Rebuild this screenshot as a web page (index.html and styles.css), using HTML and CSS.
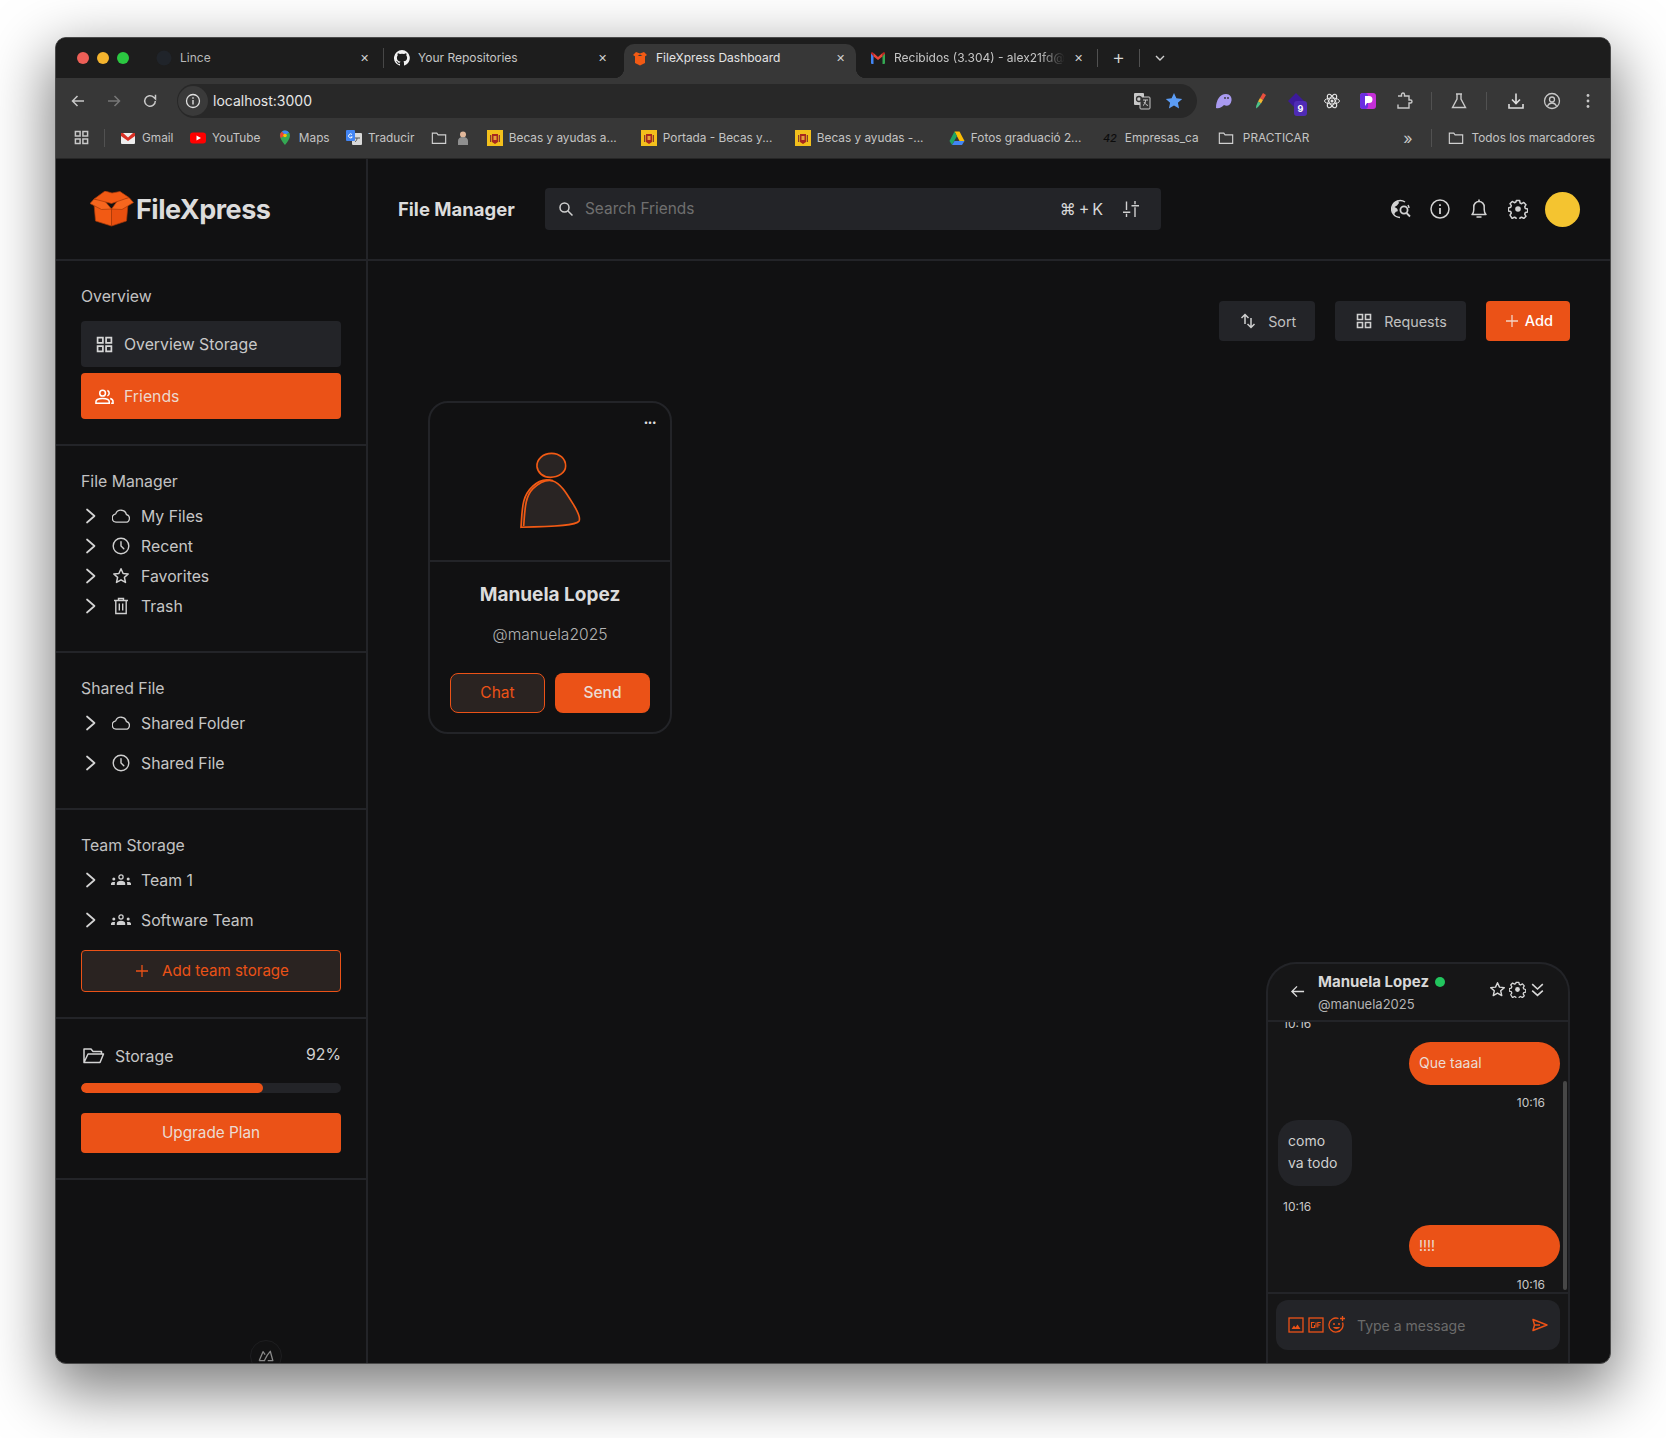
FILE: index.html
```html
<!DOCTYPE html>
<html>

<head>
    <title>FileXpress Dashboard</title>
    <link rel="stylesheet" href="styles.css">
</head>

<body>
    <svg class="sprite" xmlns="http://www.w3.org/2000/svg">
        <symbol id="i-grid" viewBox="0 0 16 16"><path d="M1.5 1.5h5v5h-5zM9.5 1.5h5v5h-5zM1.5 9.5h5v5h-5zM9.5 9.5h5v5h-5z" fill="none" stroke="currentColor" stroke-width="1.6"/></symbol>
        <symbol id="i-chevron" viewBox="0 0 12 16"><path d="M2 1.500 9.500 8 2 14.500" fill="none" stroke="currentColor" stroke-width="1.700" stroke-linecap="round" stroke-linejoin="round"/></symbol>
        <symbol id="i-cloud" viewBox="1 1 18 14"><path d="M5 14.200h9.600a3.900 3.900 0 0 0 .8-7.700 5.600 5.600 0 0 0-10.700-.6A4.200 4.200 0 0 0 5 14.200z" fill="none" stroke="currentColor" stroke-width="1.300" stroke-linejoin="round"/></symbol>
        <symbol id="i-clock" viewBox="0 0 18 18"><circle cx="9" cy="9" r="7.800" fill="none" stroke="currentColor" stroke-width="1.400"/><path d="M9 4.600V9l2.800 2.800" fill="none" stroke="currentColor" stroke-width="1.400" stroke-linecap="round"/></symbol>
        <symbol id="i-star" viewBox="0 0 18 18"><path d="m9 1.800 2.100 4.700 5.100.5-3.800 3.400 1.100 5-4.500-2.600-4.500 2.600 1.100-5L1.800 7l5.100-.5z" fill="none" stroke="currentColor" stroke-width="1.500" stroke-linejoin="round"/></symbol>
        <symbol id="i-trash" viewBox="0 0 16 18"><path d="M1 3.500h14M5.500 3V1.500h5V3M2.800 3.500v13h10.400v-13M6.300 6.500v7M9.700 6.500v7" fill="none" stroke="currentColor" stroke-width="1.400"/></symbol>
        <symbol id="i-team" viewBox="0 0 20 12"><g fill="currentColor"><circle cx="10" cy="3" r="2.100" fill="none" stroke="currentColor" stroke-width="1.300"/><path d="M5.800 11V9.500c0-1.800 1.800-2.800 4.200-2.800s4.200 1 4.200 2.800V11z"/><circle cx="2.800" cy="5" r="1.500"/><path d="M0 11V9.700C0 8.500 1.100 8 2.800 8c.6 0 1 .1 1.400.2a4 4 0 0 0-.4 1.600V11z"/><circle cx="17.200" cy="5" r="1.500"/><path d="M20 11V9.700C20 8.500 18.900 8 17.200 8c-.6 0-1 .1-1.400.2.300.5.400 1 .4 1.600V11z"/></g></symbol>
        <symbol id="i-gear" viewBox="0 0 20 20"><path d="M8.400 1.500h3.200l.5 2.500 1.500.7 2.200-1.300 2.200 2.300-1.300 2.100.6 1.600 2.400.6v3l-2.400.6-.6 1.500 1.300 2.200-2.200 2.200-2.200-1.300-1.500.6-.5 2.500H8.400l-.5-2.500-1.500-.6-2.200 1.300L2 16.200l1.300-2.200-.6-1.500-2.400-.6v-3l2.400-.6.6-1.600L2 4.700l2.200-2.300 2.200 1.300 1.500-.7z" fill="none" stroke="currentColor" stroke-width="1.500" stroke-linejoin="round"/><circle cx="10" cy="10" r="2.800" fill="currentColor"/></symbol>
        <symbol id="i-folder" viewBox="0 0 18 16"><path d="M1.500 14V2.500h5l1.500 2h8.500V14z" fill="none" stroke="currentColor" stroke-width="1.300"/></symbol>
        <symbol id="i-flag" viewBox="0 0 16 16"><rect width="16" height="16" fill="#f3c01c"/><path d="M5 4h6v8l-3 2-3-2z" fill="#a8281e"/><path d="M6.500 6h3v4h-3z" fill="#e7a23a"/><path d="M3 5h1.300v7H3zM11.700 5H13v7h-1.300z" fill="#8c3b2c"/></symbol>
        <symbol id="i-plus" viewBox="0 0 12 12"><path d="M6 0v12M0 6h12" fill="none" stroke="currentColor" stroke-width="1.300"/></symbol>
    </svg>

    <div class="window">
        <div class="tabstrip">
            <div class="lights"><span class="light red"></span><span class="light amber"></span><span class="light green"></span></div>
            <div class="tab">
                <svg class="fav" viewBox="0 0 16 16"><circle cx="8" cy="8" r="7.500" fill="#20242a"/></svg>
                <span class="tab-title dim">Lince</span><span class="tab-close">✕</span>
            </div>
            <div class="tab tab-sep">
                <svg class="fav" viewBox="0 0 16 16"><path fill="#f1f1f1" d="M8 0a8 8 0 0 0-2.500 15.600c.4.100.5-.2.500-.4v-1.400c-2.200.5-2.700-1-2.700-1-.4-.9-.9-1.200-.9-1.200-.7-.5.100-.5.100-.5.800.100 1.200.8 1.200.8.700 1.200 1.900.9 2.300.7.100-.5.300-.9.500-1.100-1.800-.2-3.600-.9-3.600-4 0-.9.300-1.600.8-2.100-.1-.2-.4-1 .1-2.100 0 0 .7-.2 2.200.8a7.600 7.600 0 0 1 4 0c1.500-1 2.200-.8 2.200-.8.500 1.100.2 1.900.1 2.100.5.600.8 1.300.8 2.100 0 3.100-1.900 3.700-3.700 3.900.3.300.6.800.6 1.500v2.200c0 .2.100.5.600.4A8 8 0 0 0 8 0z"/></svg>
                <span class="tab-title">Your Repositories</span><span class="tab-close">✕</span>
            </div>
            <div class="tab tab-active">
                <svg class="fav" viewBox="0 0 16 16"><path fill="#f25a14" d="M3 6h10v7l-5 2.500L3 13zM1 5l3-3 4 1.500 4-1.500 3 3-3 2-4-2.500L4 7z"/></svg>
                <span class="tab-title bright">FileXpress Dashboard</span><span class="tab-close">✕</span>
            </div>
            <div class="tab tab-last">
                <svg class="fav" viewBox="0 0 16 16"><path fill="#4285f4" d="M1 3.500h2.500V14H2a1 1 0 0 1-1-1z"/><path fill="#34a853" d="M12.500 3.500H15V13a1 1 0 0 1-1 1h-1.500z"/><path fill="#ea4335" d="m3.500 3 4.500 4 4.500-4v3.500L8 10 3.500 6.500z"/><path fill="#c5221f" d="M1 3.500C1 2.200 2.500 1.700 3.500 3v3.500zM15 3.500c0-1.300-1.500-1.800-2.500-.5v3.500z"/></svg>
                <span class="tab-title fade">Recibidos (3.304) - alex21fd@</span><span class="tab-close">✕</span>
            </div>
            <span class="strip-sep"></span>
            <span class="new-tab">+</span>
            <span class="strip-sep"></span>
            <svg class="tab-menu" viewBox="0 0 10 6"><path d="m1 1 4 4 4-4" fill="none" stroke="#d0d0d0" stroke-width="1.400"/></svg>
        </div>

        <div class="toolbar">
            <svg class="nav" viewBox="0 0 16 16"><path d="M14 8H2.500M7.500 3l-5 5 5 5" fill="none" stroke="#c8c8c8" stroke-width="1.500"/></svg>
            <svg class="nav" viewBox="0 0 16 16"><path d="M2 8h11.500M8.500 3l5 5-5 5" fill="none" stroke="#777" stroke-width="1.500"/></svg>
            <svg class="nav" viewBox="0 0 16 16"><path d="M13.300 8a5.300 5.300 0 1 1-1.600-3.800L13.500 6V1.800" fill="none" stroke="#c8c8c8" stroke-width="1.500"/></svg>
            <div class="urlbar">
                <span class="url-info"><svg viewBox="0 0 16 16"><circle cx="8" cy="8" r="6.500" fill="none" stroke="#e0e0e0" stroke-width="1.300"/><path d="M8 7v4.500M8 4.300v1.400" stroke="#e0e0e0" stroke-width="1.400"/></svg></span>
                <span class="url-text">localhost:3000</span>
                <svg class="url-translate" viewBox="0 0 18 18"><rect x="1" y="1" width="10" height="12" rx="1" fill="#c8c8c8"/><rect x="7" y="5" width="10" height="12" rx="1" fill="#333" stroke="#c8c8c8"/><circle cx="6" cy="7" r="2.500" fill="none" stroke="#333" stroke-width="1.300"/><path d="M10 8h5M12.500 8c0 3-1 4.500-2.500 5.500M11 10c1 2 2.500 3 4 3.500" fill="none" stroke="#c8c8c8"/></svg>
                <svg class="url-star" viewBox="0 0 18 18"><path d="m9 1 2.400 5.300 5.800.6-4.300 3.900 1.200 5.700L9 13.600l-5.100 2.900 1.200-5.700L.8 6.900l5.800-.6z" fill="#5b9cf5"/></svg>
            </div>
            <div class="extensions">
                <svg class="ext" viewBox="0 0 18 18"><path d="M1 16C1 8 5 2 11 2c4 0 6 3 5.500 6.500C16 13 12 15 9 13c-2 2-5 4-8 3z" fill="#a99af0"/><circle cx="10" cy="6" r=".9" fill="#333"/><circle cx="13" cy="6" r=".9" fill="#333"/></svg>
                <svg class="ext" viewBox="0 0 18 18"><path d="m12 1 3 2-3 5-3-2z" fill="#ea4f3d"/><path d="m9 6 3 2-2 3.500-3-2z" fill="#f2b632"/><path d="m7 9.500 3 2L7 15l-2 1.500.2-2.500z" fill="#4cc38a"/></svg>
                <span class="ext-stack">
                    <svg class="ext" viewBox="0 0 18 18"><path d="m9 1 8 8-8 8-8-8z" fill="#3c1a9a"/></svg>
                    <span class="ext-badge">9</span>
                </span>
                <svg class="ext" viewBox="0 0 18 18"><g fill="none" stroke="#e4e4e4" stroke-width="1"><ellipse cx="9" cy="9" rx="7.500" ry="3"/><ellipse cx="9" cy="9" rx="7.500" ry="3" transform="rotate(60 9 9)"/><ellipse cx="9" cy="9" rx="7.500" ry="3" transform="rotate(120 9 9)"/></g><circle cx="9" cy="9" r="1.500" fill="#e4e4e4"/></svg>
                <svg class="ext" viewBox="0 0 18 18"><rect x="1" y="1" width="16" height="16" rx="3" fill="#c42fd8"/><rect x="1" y="1" width="8" height="16" rx="3" fill="#6a2de0"/><path d="M6 14V4h4a3.500 3.500 0 0 1 0 7H8l-2 3z" fill="#fff"/></svg>
                <svg class="ext" viewBox="0 0 18 18"><path d="M3 4h3.500V2.500a1.500 1.500 0 0 1 3 0V4H14v4h1.500a1.500 1.500 0 0 1 0 3H14v5H3v-3.500" fill="none" stroke="#c8c8c8" stroke-width="1.400"/></svg>
                <span class="strip-sep"></span>
                <svg class="ext" viewBox="0 0 18 18"><path d="M6 2h6M7 2v5l-4.500 8.500h13L11 7V2" fill="none" stroke="#c8c8c8" stroke-width="1.400"/></svg>
                <span class="strip-sep"></span>
                <svg class="ext ext-download" viewBox="0 0 18 18"><path d="M9 1.500V11M5 7.500 9 11.500l4-4M2 12v4h14v-4" fill="none" stroke="#dcdcdc" stroke-width="1.600"/></svg>
                <svg class="ext" viewBox="0 0 18 18"><circle cx="9" cy="9" r="7.500" fill="none" stroke="#c8c8c8" stroke-width="1.300"/><circle cx="9" cy="7.500" r="2.500" fill="none" stroke="#c8c8c8" stroke-width="1.300"/><path d="M4.500 14c1-2 2.500-3 4.500-3s3.500 1 4.500 3" fill="none" stroke="#c8c8c8" stroke-width="1.300"/></svg>
                <svg class="ext" viewBox="0 0 18 18"><g fill="#c8c8c8"><circle cx="9" cy="3.500" r="1.400"/><circle cx="9" cy="9" r="1.400"/><circle cx="9" cy="14.500" r="1.400"/></g></svg>
            </div>
        </div>

        <div class="bookmarks">
            <svg class="bm-apps"><use href="#i-grid"/></svg>
            <span class="strip-sep bm-first-sep"></span>
            <span class="bm">
                <svg viewBox="0 0 16 16"><rect x="1" y="3" width="14" height="11" rx="1" fill="#eee"/><path d="M1 3h2l5 4.500L13 3h2v3l-7 5-7-5z" fill="#d93025"/></svg>Gmail
            </span>
            <span class="bm">
                <svg viewBox="0 0 16 16"><rect y="2.500" width="16" height="11" rx="3" fill="#f00"/><path d="M6.500 5.500 11 8l-4.500 2.500z" fill="#fff"/></svg>YouTube
            </span>
            <span class="bm">
                <svg viewBox="0 0 16 16"><path d="M8 15S3 9.500 3 5.500a5 5 0 0 1 10 0C13 9.500 8 15 8 15z" fill="#34a853"/><path d="M3 5.500a5 5 0 0 1 2-4l3 3.500-4 3a6 6 0 0 1-1-2.500z" fill="#ea4335"/><path d="M5 1.500a5 5 0 0 1 3-1 5 5 0 0 1 4 2L8 5z" fill="#4285f4"/><circle cx="8" cy="5.500" r="1.800" fill="#fbbc04"/></svg>Maps
            </span>
            <span class="bm">
                <svg viewBox="0 0 16 16"><rect x="6" y="3" width="10" height="12" rx="1" fill="#d9d9d9"/><rect width="9" height="11" rx="1" fill="#4285f4"/><path d="M6 4.500a2 2 0 1 0 .3 2.500H4.700" fill="none" stroke="#fff"/><path d="M9 8h5M11 8c0 2-1 3-2 4" fill="none" stroke="#555"/></svg>Traducir
            </span>
            <span class="bm bm-folder">
                <svg><use href="#i-folder"/></svg>
                <svg viewBox="0 0 16 16"><circle cx="8" cy="4.500" r="3" fill="#e0b79a"/><path d="M3 15v-4c0-2.500 2-4 5-4s5 1.500 5 4v4z" fill="#8f8f8f"/></svg>
            </span>
            <span class="bm bm-wide"><svg><use href="#i-flag"/></svg>Becas y ayudas a...</span>
            <span class="bm bm-wide"><svg><use href="#i-flag"/></svg>Portada - Becas y...</span>
            <span class="bm bm-wide"><svg><use href="#i-flag"/></svg>Becas y ayudas -...</span>
            <span class="bm bm-wide">
                <svg viewBox="0 0 16 16"><path d="M5.500 1.500h5L15.500 11h-5z" fill="#fbbc04"/><path d="M5.500 1.500 .5 11 3 15l5-9z" fill="#1fa463"/><path d="M3 15h10l2.500-4H5.500z" fill="#4285f4"/></svg>Fotos graduació 2...
            </span>
            <span class="bm bm-mid">
                <svg viewBox="0 0 16 16"><text x="0" y="12" class="bm-42">42</text></svg>Empresas_ca
            </span>
            <span class="bm bm-practice"><svg><use href="#i-folder"/></svg>PRACTICAR</span>
            <span class="bm-more">»</span>
            <span class="strip-sep"></span>
            <span class="bm bm-all"><svg><use href="#i-folder"/></svg>Todos los marcadores</span>
        </div>

        <div class="app">
            <aside class="sidebar">
                <div class="logo">
                    <svg class="logo-box" viewBox="0 0 44 36">
                        <path d="M4 13 21.500 18v17L5.500 30z" fill="#f25a14" stroke="#a83a08" stroke-width=".7"/>
                        <path d="M38 13 21.500 18v17l15-5z" fill="#e84f0f" stroke="#a83a08" stroke-width=".7"/>
                        <path d="M21.500 18 14 9 4 8 0 12.500l11.500 6z" fill="#f7661e" stroke="#a83a08" stroke-width=".7"/>
                        <path d="M21.500 18 28 9l11-2.500 4.500 5-11.500 7z" fill="#f7661e" stroke="#a83a08" stroke-width=".7"/>
                        <path d="M4 8 15 0l7 2 8-1.500 9 6-17.500 6z" fill="#f25a14" stroke="#a83a08" stroke-width=".7"/>
                    </svg>
                    <span class="logo-text">FileXpress</span>
                </div>

                <section class="side-section">
                    <h3 class="side-label">Overview</h3>
                    <a class="side-btn"><svg class="side-icon"><use href="#i-grid"/></svg>Overview Storage</a>
                    <a class="side-btn side-btn-on">
                        <svg class="side-icon" viewBox="0 0 20 16"><g fill="none" stroke="currentColor" stroke-width="1.600"><circle cx="8" cy="4.500" r="3"/><path d="M1 15v-1.500C1 11 4 10 8 10s7 1 7 3.500V15zM13 1.700a3 3 0 0 1 0 5.600M16 10c2 .5 3 1.700 3 3.500V15h-2"/></g></svg>Friends
                    </a>
                </section>

                <section class="side-section sec-files">
                    <h3 class="side-label">File Manager</h3>
                    <ul class="tree tree-tight">
                        <li><svg class="chev"><use href="#i-chevron"/></svg><svg class="tree-icon"><use href="#i-cloud"/></svg>My Files</li>
                        <li><svg class="chev"><use href="#i-chevron"/></svg><svg class="tree-icon"><use href="#i-clock"/></svg>Recent</li>
                        <li><svg class="chev"><use href="#i-chevron"/></svg><svg class="tree-icon"><use href="#i-star"/></svg>Favorites</li>
                        <li><svg class="chev"><use href="#i-chevron"/></svg><svg class="tree-icon"><use href="#i-trash"/></svg>Trash</li>
                    </ul>
                </section>

                <section class="side-section sec-shared">
                    <h3 class="side-label">Shared File</h3>
                    <ul class="tree">
                        <li><svg class="chev"><use href="#i-chevron"/></svg><svg class="tree-icon"><use href="#i-cloud"/></svg>Shared Folder</li>
                        <li><svg class="chev"><use href="#i-chevron"/></svg><svg class="tree-icon"><use href="#i-clock"/></svg>Shared File</li>
                    </ul>
                </section>

                <section class="side-section sec-team">
                    <h3 class="side-label">Team Storage</h3>
                    <ul class="tree">
                        <li><svg class="chev"><use href="#i-chevron"/></svg><svg class="tree-icon tree-icon-team"><use href="#i-team"/></svg>Team 1</li>
                        <li><svg class="chev"><use href="#i-chevron"/></svg><svg class="tree-icon tree-icon-team"><use href="#i-team"/></svg>Software Team</li>
                    </ul>
                    <button class="add-team"><svg class="plus"><use href="#i-plus"/></svg>Add team storage</button>
                </section>

                <section class="side-section sec-storage">
                    <div class="storage-row">
                        <svg class="storage-icon" viewBox="0 0 22 16"><path d="M1 14.500V1h7l2 2.500h8.500V6M1 14.500h16l3.500-8.500H5z" fill="none" stroke="currentColor" stroke-width="1.500" stroke-linejoin="round"/></svg>
                        <span>Storage</span>
                        <span class="storage-pct">92%</span>
                    </div>
                    <div class="progress"><div class="progress-fill" style="width: 70%"></div></div>
                    <button class="upgrade">Upgrade Plan</button>
                </section>
            </aside>

            <main class="main">
                <header class="topbar">
                    <h1 class="page-title">File Manager</h1>
                    <div class="search">
                        <svg class="search-icon" viewBox="0 0 16 16"><circle cx="6.500" cy="6.500" r="4.500" fill="none" stroke="currentColor" stroke-width="1.500"/><path d="m10 10 4.500 4.500" stroke="currentColor" stroke-width="1.500"/></svg>
                        <span class="search-text">Search Friends</span>
                        <span class="search-keys">⌘ + K</span>
                        <svg class="search-sort" viewBox="0 0 16 16"><path d="M3.500.5V9M0 11.300h7.300M3.500 12.800V16M12 0v3.200M8.500 4.700H16M12 6.200V16" fill="none" stroke="currentColor" stroke-width="1.400"/></svg>
                    </div>
                    <div class="top-icons">
                        <svg class="top-icon" viewBox="0 0 20 20"><path d="M14 3A8.500 8.500 0 1 0 9 18.500" fill="none" stroke="currentColor" stroke-width="1.500"/><path d="M7 1.500C3 3 1 6 1 10c0 2 .7 4 2 5.500 1-1 1-3 3-3 1 0 1-2 0-3L3.500 8 6 6.500 8 4z" fill="currentColor"/><circle cx="13" cy="11" r="3.600" fill="none" stroke="currentColor" stroke-width="1.800"/><path d="m15.500 14 3.500 3.500" stroke="currentColor" stroke-width="1.800"/><path d="M18 9a8 8 0 0 0-1-3" fill="none" stroke="currentColor" stroke-width="1.500"/></svg>
                        <svg class="top-icon" viewBox="0 0 20 20"><circle cx="10" cy="10" r="9" fill="none" stroke="currentColor" stroke-width="1.500"/><path d="M10 9v6M10 5.200v1.800" stroke="currentColor" stroke-width="1.800"/></svg>
                        <svg class="top-icon" viewBox="0 0 20 20"><path d="M3 15.500h14c-1.300-1-1.800-2.500-1.800-5V8A5.200 5.200 0 0 0 10 2.500 5.200 5.200 0 0 0 4.800 8v2.500c0 2.500-.5 4-1.800 5z" fill="none" stroke="currentColor" stroke-width="1.500" stroke-linejoin="round"/><path d="M10 .5v2M7.500 18h5" stroke="currentColor" stroke-width="1.600"/></svg>
                        <svg class="top-icon"><use href="#i-gear"/></svg>
                        <span class="avatar"></span>
                    </div>
                </header>

                <div class="actions">
                    <button class="action-btn action-sort"><svg class="action-icon" viewBox="0 0 16 16"><path d="M5 11V1.500M1.500 5 5 1.500 8.500 5M11 5v9.500M7.500 11l3.500 3.500 3.500-3.500" fill="none" stroke="currentColor" stroke-width="1.500"/></svg>Sort</button>
                    <button class="action-btn"><svg class="action-icon"><use href="#i-grid"/></svg>Requests</button>
                    <button class="action-btn action-add"><svg class="action-plus"><use href="#i-plus"/></svg>Add</button>
                </div>

                <article class="friend-card">
                    <div class="card-top">
                        <span class="card-dots">•••</span>
                        <svg class="sketch" viewBox="290 180 200 240">
                            <path d="M352 222c2-20 24-34 50-30 24 4 36 26 30 44-6 18-32 30-56 24-18-4-26-20-24-38z" fill="#292423"/>
                            <path d="M302 412c2-40 4-90 30-118 18-20 40-30 64-24 28 8 46 38 66 74 10 18 20 36 14 48-8 14-60 16-174 20z" fill="#292423"/>
                            <g fill="none" stroke="#f25a14" stroke-width="5">
                                <path d="M350 230c-2-22 18-40 44-40 24 0 42 16 42 38 0 20-22 34-46 34-22 0-38-14-40-32z"/>
                                <path d="M302 412c4-56 2-92 34-122 18-18 40-24 60-18 26 8 44 40 66 76 12 20 20 36 14 46-8 12-60 16-174 18z"/>
                                <path d="M310 408c4-50 4-88 28-112 20-20 42-28 60-24"/>
                            </g>
                        </svg>
                    </div>
                    <div class="card-body">
                        <h2 class="card-name">Manuela Lopez</h2>
                        <p class="card-handle">@manuela2025</p>
                        <div class="card-btns">
                            <button class="btn-chat">Chat</button>
                            <button class="btn-send">Send</button>
                        </div>
                    </div>
                </article>

                <div class="chat">
                    <div class="chat-head">
                        <svg class="chat-back" viewBox="0 0 16 16"><path d="M15 8H2M7.500 2.500 2 8l5.500 5.500" fill="none" stroke="currentColor" stroke-width="1.400"/></svg>
                        <div class="chat-who">
                            <div class="chat-name">Manuela Lopez<span class="online"></span></div>
                            <div class="chat-handle">@manuela2025</div>
                        </div>
                        <div class="chat-tools">
                            <svg class="chat-tool"><use href="#i-star"/></svg>
                            <svg class="chat-tool"><use href="#i-gear"/></svg>
                            <svg class="chat-tool" viewBox="0 0 16 16"><path d="m3 3 5 4.500L13 3M3 9l5 4.500L13 9" fill="none" stroke="currentColor" stroke-width="1.500"/></svg>
                        </div>
                    </div>
                    <div class="chat-log">
                        <div class="msg-time time-clipped">10:16</div>
                        <div class="bubble bubble-me">Que taaal</div>
                        <div class="msg-time time-me">10:16</div>
                        <div class="bubble bubble-them">como<br>va todo</div>
                        <div class="msg-time time-them">10:16</div>
                        <div class="bubble bubble-me bubble-last">!!!!</div>
                        <div class="msg-time time-me">10:16</div>
                        <span class="chat-scroll"></span>
                    </div>
                    <div class="chat-input-row">
                        <div class="chat-input">
                            <svg class="chat-att" viewBox="0 0 16 16"><rect x="1" y="1" width="14" height="14" fill="none" stroke="currentColor" stroke-width="1.300"/><path d="M3.500 12 6 8.500 7.500 10.500 9.500 7.500 12.500 12z" fill="currentColor"/></svg>
                            <svg class="chat-att" viewBox="0 0 16 16"><rect x="1" y="1" width="14" height="14" fill="none" stroke="currentColor" stroke-width="1.300"/><path d="M6.500 5.500h-3v5h3V8M8 5.500v5M9.800 10.500v-5h3M9.800 8h2.500" fill="none" stroke="currentColor" stroke-width="1.100"/></svg>
                            <svg class="chat-att chat-emoji" viewBox="0 0 18 18"><path d="M14.500 6.500A7 7 0 1 1 10.500 2.500" fill="none" stroke="currentColor" stroke-width="1.300"/><circle cx="6" cy="8" r="1" fill="currentColor"/><circle cx="11" cy="8" r="1" fill="currentColor"/><path d="M5 11c1 2.500 6 2.500 7 0z" fill="currentColor"/><path d="M14.500 0v5M12 2.500h5" stroke="currentColor" stroke-width="1.300"/></svg>
                            <span class="chat-placeholder">Type a message</span>
                            <svg class="chat-send" viewBox="0 0 16 14"><path d="M1 1.500 15 7 1 12.500l1.500-5.500zM2.500 7H8" fill="none" stroke="currentColor" stroke-width="1.500" stroke-linejoin="round"/></svg>
                        </div>
                    </div>
                </div>
            </main>
            <span class="devtool"><svg viewBox="0 0 18 14"><path d="M1 12.500 5.500 2 8 5.500M8 12.500H1M7 12.500 10.500 6 14 1.500 17 12.500h-6" fill="none" stroke="#8a8a8a" stroke-width="1.500" stroke-linejoin="round"/></svg></span>
        </div>
    </div>
</body>

</html>
```

FILE: styles.css
```css
* {
    box-sizing: border-box;
}

body {
    margin: 0;
    width: 1666px;
    height: 1438px;
    padding: 37px 0 0 55px;
    background-color: #fff;
    font-family: Inter, "Liberation Sans", sans-serif;
    color: #c9c9c9;
    overflow: hidden;
}

.sprite {
    display: none;
}

.window {
    width: 1556px;
    height: 1327px;
    border: 1px solid #4a4a4a;
    border-radius: 11px;
    background-color: #111112;
    box-shadow: 0 22px 60px 6px rgba(0, 0, 0, .5);
    overflow: hidden;
    position: relative;
}

/* browser chrome */
.tabstrip {
    display: flex;
    align-items: flex-end;
    height: 40px;
    background-color: #1d1d1d;
    position: relative;
}

.lights {
    display: flex;
    gap: 8px;
    width: 92px;
    padding: 0 0 14px 21px;
}

.light {
    width: 12px;
    height: 12px;
    border-radius: 50%;
}

.red { background-color: #ed5f57; }
.amber { background-color: #f4b42e; }
.green { background-color: #2bc841; }

.tab {
    display: flex;
    align-items: center;
    width: 232px;
    height: 34px;
    margin-right: 6px;
    padding: 0 9px 7px 8px;
    font-size: 12px;
    border-radius: 10px 10px 0 0;
    color: #c6c6c6;
    position: relative;
}

.tab-last {
    margin-right: 3px;
}

.tab-sep::before {
    content: "";
    position: absolute;
    left: -3px;
    top: 4px;
    width: 1px;
    height: 20px;
    background-color: #474747;
}

.tab-active {
    background-color: #373737;
}

.tab-active::before,
.tab-active::after {
    content: "";
    position: absolute;
    bottom: 0;
    width: 10px;
    height: 10px;
}

.tab-active::before {
    left: -10px;
    background: radial-gradient(circle at 0 0, transparent 10px, #373737 10.5px);
}

.tab-active::after {
    right: -10px;
    background: radial-gradient(circle at 100% 0, transparent 10px, #373737 10.5px);
}

.fav {
    width: 16px;
    height: 16px;
    flex: none;
    margin-right: 8px;
}

.tab-title {
    flex: 1;
    white-space: nowrap;
    overflow: hidden;
}

.tab-title.dim { color: #b8b8b8; }
.tab-title.bright { color: #e4e4e4; }

.tab-title.fade {
    -webkit-mask-image: linear-gradient(to right, #000 85%, transparent 100%);
    mask-image: linear-gradient(to right, #000 85%, transparent 100%);
}

.tab-close {
    width: 14px;
    margin-left: 6px;
    text-align: center;
    font-size: 11px;
    color: #d0d0d0;
}

.strip-sep {
    display: inline-block;
    width: 1px;
    height: 18px;
    background-color: #515151;
    flex: none;
}

.tabstrip > .strip-sep {
    margin-bottom: 11px;
}

.new-tab {
    width: 41px;
    height: 34px;
    line-height: 27px;
    text-align: center;
    font-size: 20px;
    font-weight: 300;
    color: #d8d8d8;
}

.tab-menu {
    width: 10px;
    height: 6px;
    margin: 0 0 17px 15px;
}

.toolbar {
    display: flex;
    align-items: center;
    height: 42px;
    padding: 6px 0 2px 14px;
    background-color: #373737;
}

.nav {
    width: 16px;
    height: 16px;
    margin-right: 20px;
    flex: none;
}

.urlbar {
    display: flex;
    align-items: center;
    width: 1020px;
    height: 34px;
    margin-left: -1px;
    padding-left: 1px;
    border-radius: 17px;
    background-color: #282828;
    flex: none;
}

.url-info {
    display: flex;
    align-items: center;
    justify-content: center;
    width: 30px;
    height: 30px;
    border-radius: 50%;
    background-color: #3a3a3a;
}

.url-info svg {
    width: 16px;
    height: 16px;
}

.url-text {
    flex: 1;
    margin: -1px 0 0 5px;
    font-size: 14px;
    color: #e6e6e6;
}

.url-translate {
    width: 18px;
    height: 18px;
}

.url-star {
    width: 18px;
    height: 18px;
    margin: 0 14px 0 14px;
}

.extensions {
    display: flex;
    align-items: center;
    gap: 18px;
    margin-left: 18px;
}

.ext {
    display: block;
    width: 18px;
    height: 18px;
    flex: none;
}

.ext-download {
    margin-left: 2px;
}

.ext-stack {
    position: relative;
}

.ext-badge {
    position: absolute;
    left: 7px;
    top: 9px;
    width: 13px;
    height: 15px;
    border-radius: 3px;
    background-color: #4f2bb5;
    color: #fff;
    font-size: 9px;
    font-weight: 700;
    line-height: 15px;
    text-align: center;
}

.bookmarks {
    display: flex;
    align-items: center;
    height: 39px;
    padding: 0 0 3px 18px;
    font-size: 11.8px;
    color: #c4c4c4;
    background-color: #373737;
    border-bottom: 1px solid #262626;
    white-space: nowrap;
}

.bm-apps {
    width: 15px;
    height: 15px;
    color: #c8c8c8;
    flex: none;
}

.bm-first-sep {
    margin: 0 15px 0 15px;
}

.bm {
    display: flex;
    align-items: center;
    gap: 6px;
    margin-right: 16.5px;
}

.bm svg {
    width: 16px;
    height: 16px;
    flex: none;
    color: #d0d0d0;
}

.bm-folder {
    gap: 8px;
    margin-right: 16px;
}

.bm-wide {
    width: 154px;
    margin-right: 0;
}

.bm-mid {
    width: 115px;
    margin-right: 0;
}

.bm-practice {
    gap: 9px;
}

.bm-42 {
    font-size: 11px;
    font-style: italic;
    fill: #0c0c0c;
    stroke: #0c0c0c;
    stroke-width: .2;
}

.bm-more {
    margin-left: auto;
    margin-right: 18px;
    font-size: 16px;
    line-height: 16px;
    color: #c8c8c8;
}

.bm-all {
    gap: 8px;
    margin: 0 15px 0 16px;
}

/* app */
.app {
    display: flex;
    height: 1204px;
    position: relative;
}

.sidebar {
    width: 312px;
    flex: none;
    border-right: 2px solid #232428;
}

.logo {
    display: flex;
    align-items: center;
    gap: 2px;
    height: 102px;
    padding: 0 0 0 34px;
    border-bottom: 2px solid #232428;
}

.logo-box {
    width: 44px;
    height: 36px;
}

.logo-text {
    font-size: 27px;
    font-weight: 700;
    letter-spacing: -.5px;
    color: #dcdcdc;
}

.side-section {
    padding: 26px 25px 25px;
    border-bottom: 2px solid #232428;
}

.side-label {
    margin: 0 0 14px;
    font-size: 15.8px;
    font-weight: 400;
    line-height: 20px;
    color: #c2c2c2;
}

.side-btn {
    display: flex;
    align-items: center;
    height: 46px;
    padding-left: 15px;
    border-radius: 4px;
    background-color: #232428;
    font-size: 15.8px;
    color: #c9c9c9;
}

.side-btn + .side-btn {
    margin-top: 6px;
}

.side-btn-on {
    background-color: #eb5217;
    color: #edd8cd;
}

.side-icon {
    width: 17px;
    height: 17px;
    margin-right: 11px;
    color: #d6d6d6;
}

.side-btn-on .side-icon {
    width: 19px;
    margin-left: -1px;
    margin-right: 10px;
    color: #fff;
}

.tree {
    margin: 0;
    padding: 0;
    list-style: none;
}

.side-section .side-label:has(+ .tree) {
    margin-bottom: 9px;
}

.tree li {
    display: flex;
    align-items: center;
    height: 30px;
    margin-bottom: 10px;
    font-size: 15.8px;
    color: #c6c6c6;
}

.tree li:last-child {
    margin-bottom: 0;
}

.tree-tight li {
    margin-bottom: 0;
}

.chev {
    width: 12px;
    height: 16px;
    margin: 0 15px 0 4px;
    color: #d4d4d4;
    flex: none;
}

.tree-icon {
    width: 18px;
    height: 18px;
    margin-right: 11px;
    flex: none;
    color: #d0d0d0;
}

.tree-icon-team {
    width: 20px;
    margin-left: -1px;
    margin-right: 10px;
}

.sec-files {
    padding-bottom: 30px;
}

.sec-shared {
    padding-bottom: 30px;
}

.add-team {
    display: flex;
    align-items: center;
    justify-content: center;
    width: 260px;
    height: 42px;
    margin-top: 15px;
    padding: 0 0 1px 3px;
    border: 1px solid #eb5217;
    border-radius: 4px;
    background-color: #2a2321;
    color: #eb5217;
    font-family: inherit;
    font-size: 15.1px;
}

.plus {
    width: 12px;
    height: 12px;
    margin-right: 14px;
}

.sec-storage {
    padding-top: 25px;
}

.storage-row {
    display: flex;
    align-items: center;
    height: 24px;
    font-size: 15.8px;
    color: #c6c6c6;
}

.storage-icon {
    width: 22px;
    height: 16px;
    margin: 0 10px 0 2px;
    color: #d4d4d4;
}

.storage-pct {
    margin-left: auto;
    margin-top: -4px;
    color: #d2d2d2;
}

.progress {
    height: 10px;
    margin-top: 15px;
    border-radius: 5px;
    background-color: #232428;
    overflow: hidden;
}

.progress-fill {
    height: 100%;
    border-radius: 5px;
    background-color: #eb5217;
}

.upgrade {
    display: block;
    width: 260px;
    height: 40px;
    margin-top: 20px;
    padding-bottom: 2px;
    border: 0;
    border-radius: 4px;
    background-color: #eb5217;
    color: #ecdcd3;
    font-family: inherit;
    font-size: 15.3px;
}

.main {
    flex: 1;
    position: relative;
}

.topbar {
    display: flex;
    align-items: center;
    height: 102px;
    padding: 0 0 0 30px;
    border-bottom: 2px solid #232428;
}

.page-title {
    width: 147px;
    margin: 0;
    font-size: 18.5px;
    font-weight: 700;
    color: #dcdcdc;
}

.search {
    display: flex;
    align-items: center;
    width: 616px;
    height: 42px;
    padding: 0 22px 0 13px;
    border-radius: 4px;
    background-color: #232428;
    color: #d0d0d0;
}

.search-icon {
    width: 16px;
    height: 16px;
    margin-right: 11px;
}

.search-text {
    flex: 1;
    margin-top: -1px;
    font-size: 15.4px;
    color: #6f6f6f;
}

.search-keys {
    margin-right: 20px;
    font-size: 16px;
    word-spacing: -1.5px;
    color: #d8d8d8;
}

.search-sort {
    width: 16px;
    height: 16px;
}

.top-icons {
    display: flex;
    align-items: center;
    gap: 19px;
    margin-left: auto;
    margin-right: 30px;
}

.top-icon {
    width: 20px;
    height: 20px;
    color: #d2d2d2;
}

.avatar {
    width: 35px;
    height: 35px;
    margin-left: -2px;
    border-radius: 50%;
    background-color: #f4c430;
}

.actions {
    display: flex;
    justify-content: flex-end;
    gap: 20px;
    padding: 40px 40px 0 0;
}

.action-btn {
    display: flex;
    align-items: center;
    height: 40px;
    padding: 0 19px 0 21px;
    border: 0;
    border-radius: 4px;
    background-color: #232428;
    color: #c0c0c0;
    font-family: inherit;
    font-size: 14.3px;
}

.action-icon {
    width: 16px;
    height: 16px;
    margin-right: 12px;
    color: #d0d0d0;
}

.action-add {
    padding: 0 17px 0 20px;
    background-color: #eb5217;
    color: #fff;
    font-size: 14.6px;
    font-weight: 500;
}

.action-plus {
    width: 12px;
    height: 12px;
    margin-right: 7px;
    color: #f3d3c4;
}

.friend-card {
    width: 244px;
    height: 333px;
    margin: 60px 0 0 60px;
    border: 2px solid #232428;
    border-radius: 20px;
}

.card-top {
    height: 159px;
    padding-top: 47px;
    border-bottom: 2px solid #232428;
    text-align: center;
    position: relative;
}

.card-dots {
    position: absolute;
    right: 14px;
    top: 13px;
    font-size: 8px;
    letter-spacing: -.4px;
    line-height: 12px;
    color: #dedede;
}

.sketch {
    display: block;
    width: 66.6px;
    height: 80px;
    margin: 0 auto;
}

.card-body {
    text-align: center;
}

.card-name {
    margin: 0;
    padding-top: 21px;
    font-size: 19px;
    font-weight: 700;
    line-height: 24px;
    color: #dcdcdc;
}

.card-handle {
    margin: 16px 0 0;
    font-size: 15.6px;
    font-weight: 300;
    line-height: 24px;
    color: #b4b4b4;
}

.card-btns {
    display: flex;
    justify-content: center;
    gap: 10px;
    margin-top: 26px;
}

.btn-chat,
.btn-send {
    width: 95px;
    height: 40px;
    padding-bottom: 2px;
    border-radius: 8px;
    font-family: inherit;
    font-size: 15.5px;
}

.btn-chat {
    border: 1px solid #eb5217;
    background-color: #2a2321;
    color: #eb5217;
}

.btn-send {
    border: 0;
    background-color: #eb5217;
    color: #ecdcd3;
    font-weight: 500;
}

/* floating chat */
.chat {
    display: flex;
    flex-direction: column;
    position: absolute;
    right: 40px;
    top: 803px;
    bottom: 0;
    width: 304px;
    border: 2px solid #232428;
    border-bottom: 0;
    border-radius: 30px 30px 0 0;
    background-color: #161617;
}

.chat-head {
    display: flex;
    align-items: center;
    flex: none;
    height: 58px;
    padding: 0 22px 0 22px;
    border-bottom: 2px solid #232428;
}

.chat-back {
    width: 15px;
    height: 15px;
    margin: -2px 13px 0 0;
    color: #dcdcdc;
}

.chat-who {
    margin-top: 2px;
}

.chat-name {
    display: flex;
    align-items: center;
    font-size: 15px;
    font-weight: 700;
    line-height: 20px;
    color: #d8d8d8;
}

.online {
    width: 10px;
    height: 10px;
    margin-left: 6px;
    border-radius: 50%;
    background-color: #22c55e;
}

.chat-handle {
    margin-top: 2px;
    font-size: 13px;
    line-height: 20px;
    color: #b4b4b4;
}

.chat-tools {
    display: flex;
    align-items: center;
    gap: 3px;
    margin-left: auto;
    margin-top: -5px;
    color: #d8d8d8;
}

.chat-tool {
    width: 17px;
    height: 17px;
}

.chat-log {
    flex: none;
    height: 272px;
    padding: 0 8px 0 10px;
    overflow: hidden;
    border-bottom: 2px solid #232428;
    position: relative;
}

.msg-time {
    font-size: 12px;
    line-height: 16px;
    color: #c8c8c8;
}

.time-clipped {
    margin: -6px 0 0 5px;
}

.time-me {
    margin: 10px 15px 9px 0;
    text-align: right;
}

.time-them {
    margin: 13px 0 10px 5px;
}

.bubble {
    font-size: 14px;
    line-height: 22px;
}

.bubble-me {
    width: 151px;
    height: 43px;
    margin: 10px 0 0 auto;
    padding: 10px 10px;
    border-radius: 22px;
    background-color: #eb5217;
    color: #ecdcd3;
}

.bubble-last {
    height: 42px;
    margin-top: 0;
}

.bubble-them {
    width: 74px;
    padding: 10px 10px 12px;
    border-radius: 20px;
    background-color: #232428;
    color: #d0d0d0;
}

.chat-scroll {
    position: absolute;
    right: 1px;
    top: 59px;
    bottom: 2px;
    width: 4px;
    border-radius: 2px;
    background-color: #474747;
}

.chat-input-row {
    padding: 6px 8px 0 8px;
}

.chat-input {
    display: flex;
    align-items: center;
    height: 50px;
    padding: 0 11px 0 12px;
    border-radius: 12px;
    background-color: #232428;
    color: #eb5217;
}

.chat-att {
    width: 16px;
    height: 16px;
    margin-right: 4px;
    flex: none;
}

.chat-emoji {
    width: 18px;
    height: 18px;
    margin-right: 11px;
}

.chat-placeholder {
    flex: 1;
    font-size: 14px;
    color: #6b6b6b;
}

.chat-send {
    width: 16px;
    height: 14px;
    margin-right: 1px;
}

.devtool {
    display: flex;
    justify-content: center;
    padding-top: 9px;
    position: absolute;
    left: 194px;
    bottom: -9px;
    width: 32px;
    height: 32px;
    border: 1px solid #1e1e20;
    border-radius: 50%;
    background-color: #121213;
}

.devtool svg {
    width: 16px;
    height: 12px;
}
```
